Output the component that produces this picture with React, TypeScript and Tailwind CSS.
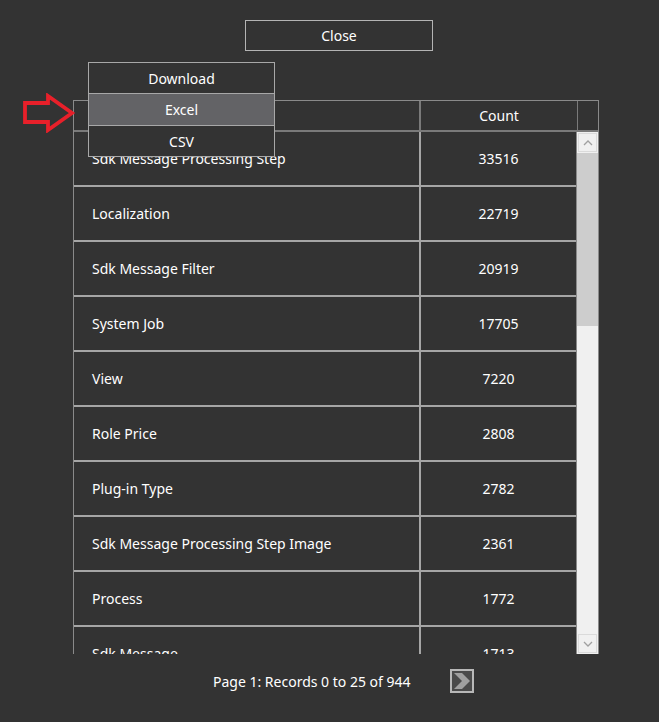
import React from 'react';

const rows: [string, number][] = [
  ['Sdk Message Processing Step', 33516],
  ['Localization', 22719],
  ['Sdk Message Filter', 20919],
  ['System Job', 17705],
  ['View', 7220],
  ['Role Price', 2808],
  ['Plug-in Type', 2782],
  ['Sdk Message Processing Step Image', 2361],
  ['Process', 1772],
  ['Sdk Message', 1713],
];

function RedArrow() {
  return (
    <svg className="absolute left-[22px] top-[93px]" width="54" height="40" viewBox="0 0 54 40">
      <polygon
        points="3,10 26,10 26,3 50,20 26,37 26,29 3,29"
        fill="none"
        stroke="#e8202a"
        strokeWidth="3.8"
        strokeLinejoin="miter"
      />
    </svg>
  );
}

function ScrollBar() {
  return (
    <div className="flex w-[21px] flex-col bg-[#f0f0f0]">
      <div className="m-px flex h-[19px] items-center justify-center border border-[#dadada] bg-[#f0f0f0]">
        <svg width="10" height="6" viewBox="0 0 10 6">
          <polyline points="1,5 5,1 9,5" fill="none" stroke="#a0a0a0" strokeWidth="1.3" />
        </svg>
      </div>
      <div className="h-[173px] bg-[#cdcdcd]" />
      <div className="flex-1" />
      <div className="m-px flex h-[19px] items-center justify-center border border-[#dadada] bg-[#f0f0f0]">
        <svg width="10" height="6" viewBox="0 0 10 6">
          <polyline points="1,1 5,5 9,1" fill="none" stroke="#a0a0a0" strokeWidth="1.3" />
        </svg>
      </div>
    </div>
  );
}

export default function App() {
  return (
    <div
      className="relative flex h-[722px] w-[659px] flex-col bg-[#333333] text-[14px] text-white"
      style={{ fontFamily: '"Segoe UI", "Noto Sans", "Open Sans", sans-serif' }}
    >
      {/* Close */}
      <div className="ml-[245px] mt-[20px] flex h-[31px] w-[188px] items-center justify-center border border-[#b4b4b4] pb-px">
        Close
      </div>

      {/* Grid */}
      <div className="ml-[73px] mt-[49px] flex h-[554px] w-[526px] flex-col border-l border-r border-t border-[#8a8a8a]">
        <div className="flex h-[31px] border-b-2 border-[#7a7a7a]">
          <div className="w-[347px] border-r-2 border-[#7a7a7a]" />
          <div className="flex w-[157px] items-center justify-center border-r border-[#7a7a7a]">Count</div>
          <div className="flex-1" />
        </div>
        <div className="flex min-h-0 flex-1">
          <div className="w-[504px] overflow-hidden border-r border-[#8a8a8a]">
            {rows.map(([name, count]) => (
              <div key={name} className="flex h-[55px] border-b-2 border-[#a6a6a6]">
                <div className="flex w-[347px] items-center border-r-2 border-[#a6a6a6] pl-[18px]">{name}</div>
                <div className="flex flex-1 items-center justify-center">{count}</div>
              </div>
            ))}
          </div>
          <ScrollBar />
        </div>
      </div>

      {/* Pager */}
      <div className="mt-[15px] flex items-center">
        <div className="ml-[213px] w-[237px]">Page 1: Records 0 to 25 of 944</div>
        <div className="flex h-[24px] w-[24px] items-center justify-center border-2 border-[#b8b8b8] bg-[#4a4a4a]">
          <svg width="18" height="18" viewBox="0 0 18 18">
            <polygon points="1,1 9,1 17,9 9,17 1,17 9,9" fill="#a0a0a0" />
          </svg>
        </div>
      </div>

      {/* Download menu */}
      <div className="absolute left-[88px] top-[62px] flex w-[187px] flex-col">
        <div className="flex h-[32px] items-center justify-center border border-[#a8a8a8] bg-[#333333]">Download</div>
        <div className="flex h-[32px] items-center justify-center border-x border-b border-[#a8a8a8] bg-[#636366]">Excel</div>
        <div className="flex h-[31px] items-center justify-center border-x border-b border-[#a8a8a8] bg-[#333333]">CSV</div>
      </div>

      <RedArrow />
    </div>
  );
}
